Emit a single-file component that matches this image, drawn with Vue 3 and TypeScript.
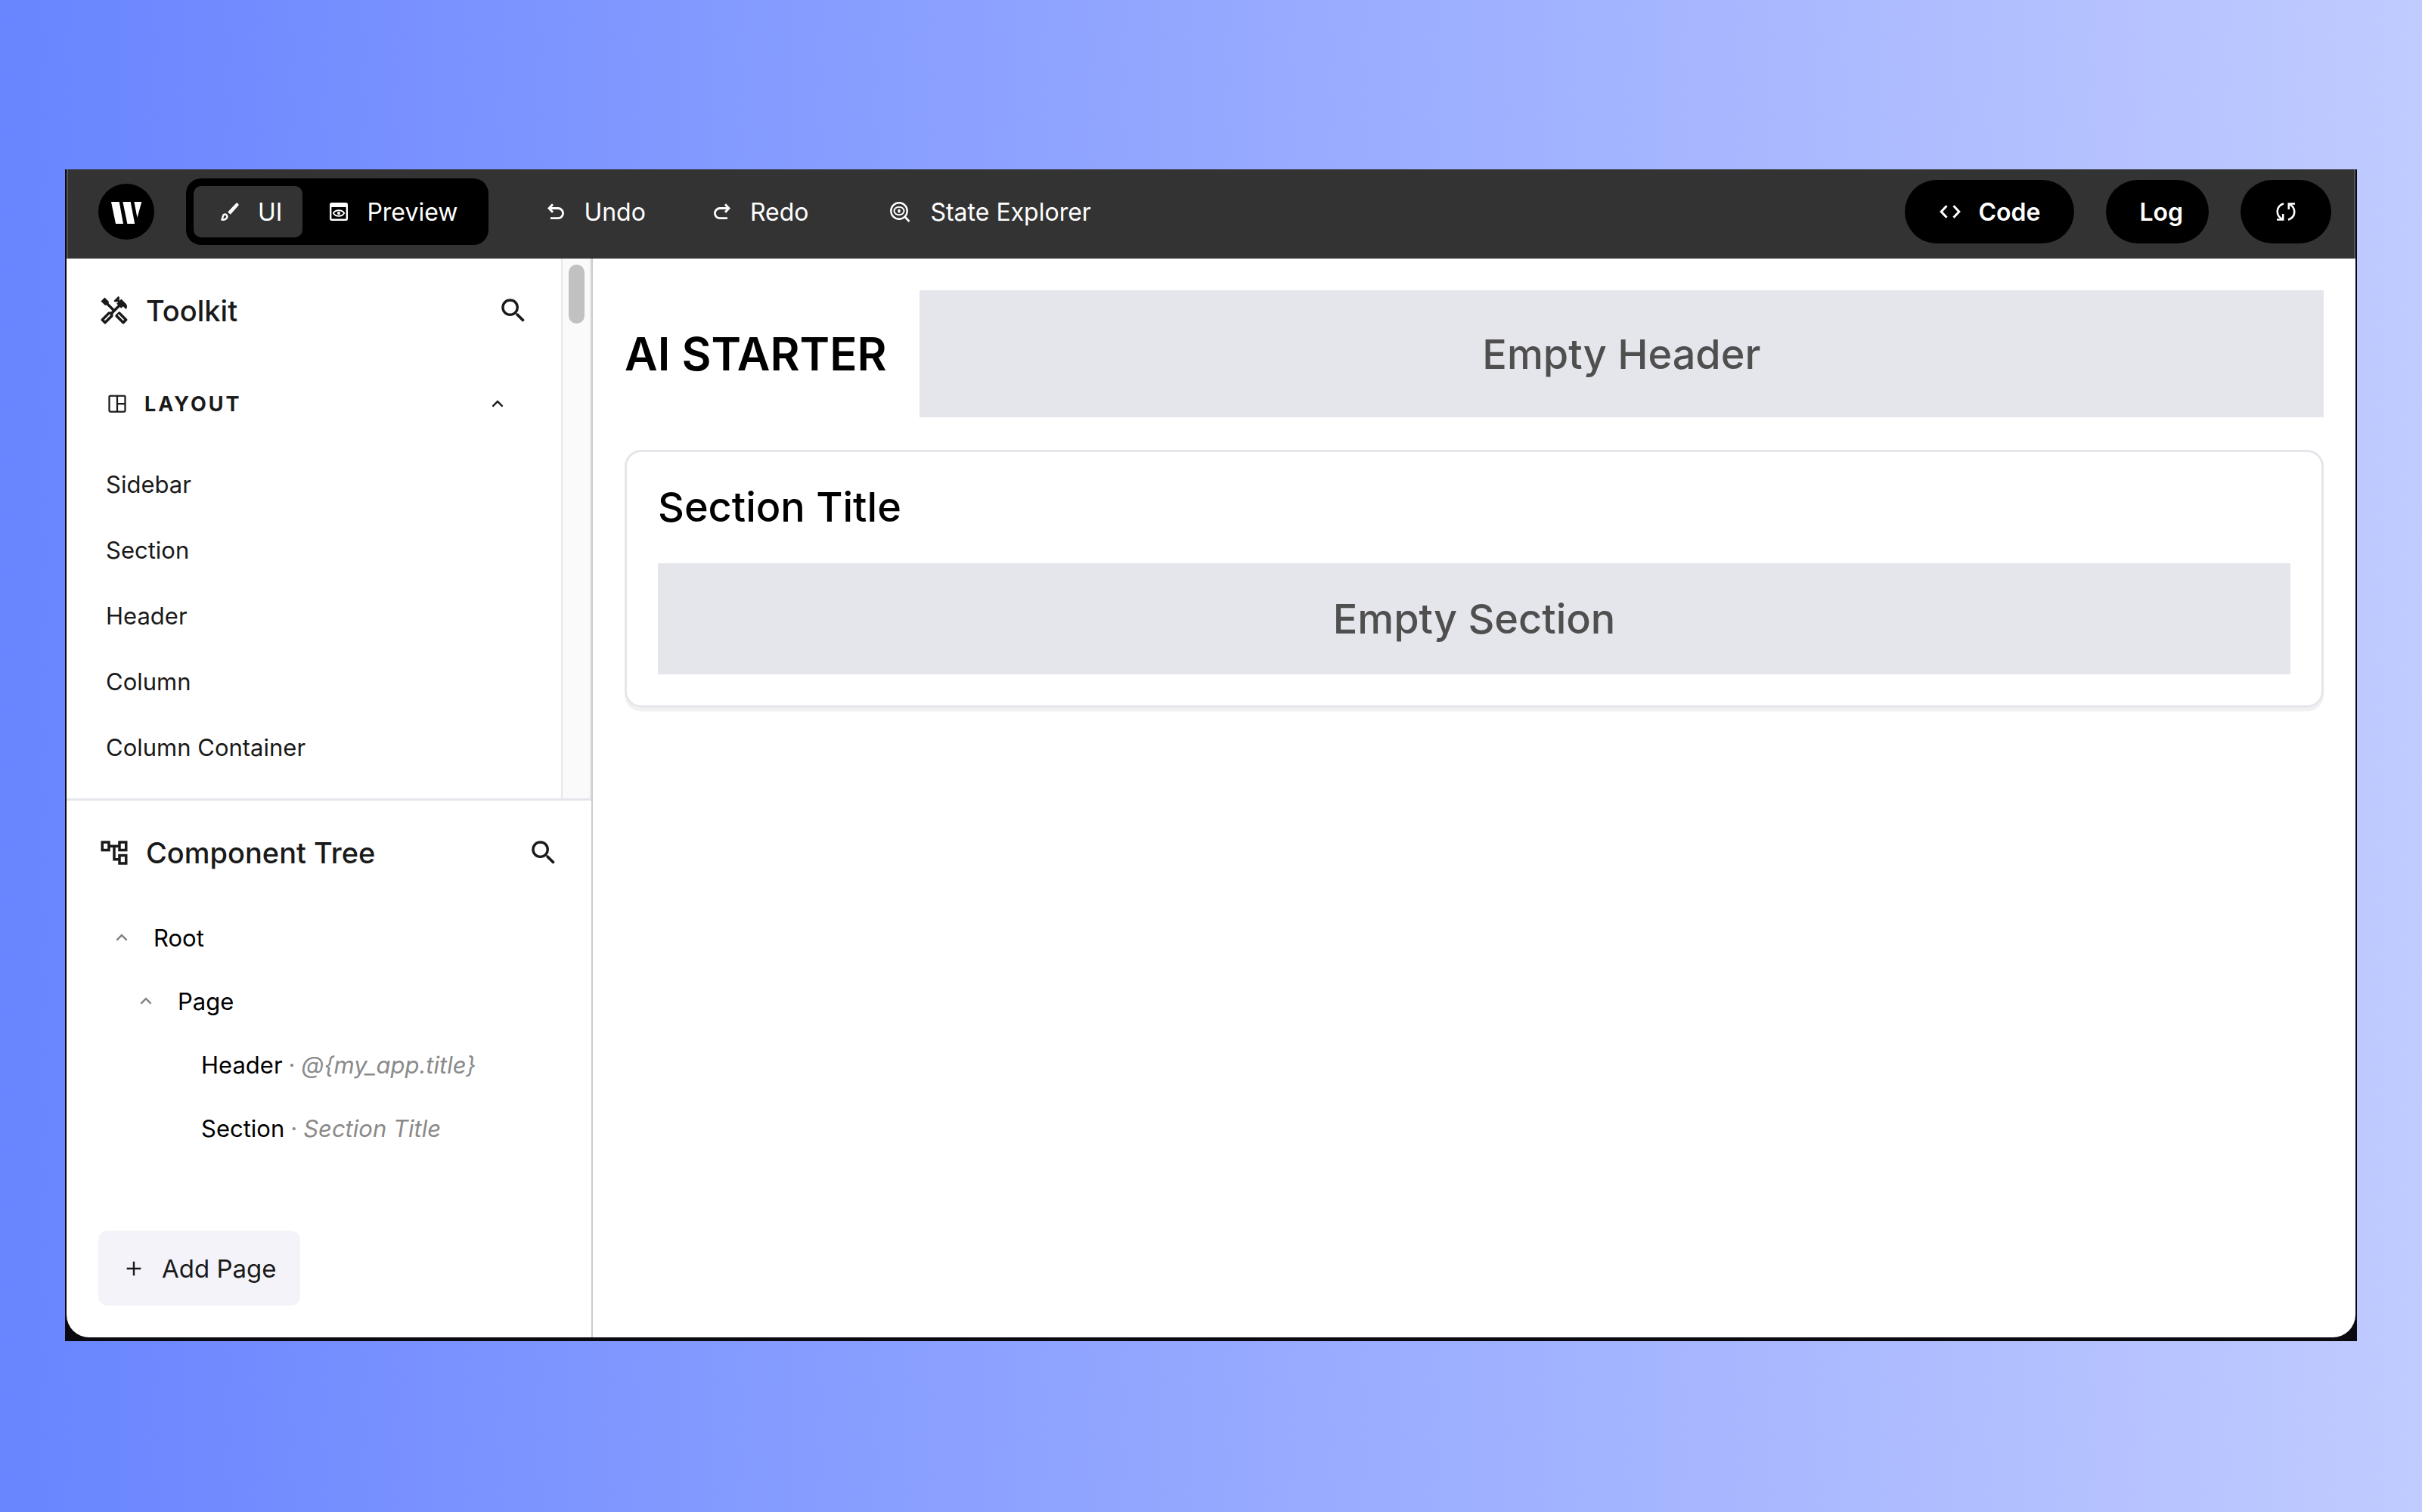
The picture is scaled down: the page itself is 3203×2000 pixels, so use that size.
<script setup lang="ts">
interface TreeNode {
  name: string
  depth: number
  expandable: boolean
  detail?: string
}

const layoutItems: string[] = ['Sidebar', 'Section', 'Header', 'Column', 'Column Container']

const treeNodes: TreeNode[] = [
  { name: 'Root', depth: 0, expandable: true },
  { name: 'Page', depth: 1, expandable: true },
  { name: 'Header', depth: 2, expandable: false, detail: '@{my_app.title}' },
  { name: 'Section', depth: 2, expandable: false, detail: 'Section Title' },
]

const caretPath = 'M12 10.828l-4.95 4.95-1.414-1.414L12 8l6.364 6.364-1.414 1.414z'
const searchPath =
  'M15.5 14h-.79l-.28-.27A6.471 6.471 0 0 0 16 9.5 6.5 6.5 0 1 0 9.5 16c1.61 0 3.09-.59 4.23-1.57l.27.28v.79l5 4.99L20.49 19l-4.99-5zm-6 0C7.01 14 5 11.99 5 9.5S7.01 5 9.5 5 14 7.01 14 9.5 11.99 14 9.5 14z'
</script>

<template>
  <div class="backdrop">
    <div class="window">
      <header class="topbar">
        <svg class="logo" viewBox="0 0 74 74" aria-label="Writer" role="img">
          <circle cx="37" cy="37" r="37" fill="#000" />
          <g fill="#fff" transform="translate(17 24)">
            <path d="M0 0h10.700l5.300 29H6z" />
            <path d="M15.400 0h10.300l5.500 29h-9.800z" />
            <path d="M30.400 0h9.900l-5.800 21z" />
          </g>
        </svg>

        <div class="modes">
          <button type="button" class="mode active">
            <svg width="24" height="24" viewBox="0 0 24 24">
              <path d="M9.200 12.500 19.800 1.300a2.200 2.200 0 0 1 3.200 3L12.700 15.800z" fill="currentColor" />
              <path
                d="M1.400 22.600c1.600-1.800.5-5.900 3.300-6.900 2.600-.8 4.500 1.900 3.300 4.300-1.200 2.300-4.100 2.900-6.600 2.600z"
                fill="none" stroke="currentColor" stroke-width="2.400" stroke-linejoin="round"
              />
            </svg>
            UI
          </button>
          <button type="button" class="mode">
            <svg width="24" height="24" viewBox="0 0 24 24" fill="none" stroke="currentColor">
              <rect x="1.200" y="1.200" width="21.600" height="21.600" rx="1.500" stroke-width="2.400" />
              <path d="M1 3.500h22" stroke-width="5" />
              <path d="M4.800 14c3-5 11.400-5 14.400 0-3 5-11.400 5-14.400 0z" stroke-width="1.800" />
              <circle cx="12" cy="14" r="2" fill="currentColor" stroke="none" />
            </svg>
            Preview
          </button>
        </div>

        <nav class="actions">
          <button type="button" class="action">
            <svg width="22" height="22" viewBox="0 0 22 22" fill="none" stroke="currentColor" stroke-width="2.800">
              <path d="M7 1.200 2 6.500l5 5.300M2.300 6.500H14a6.600 6.600 0 0 1 0 13.200H4" />
            </svg>
            Undo
          </button>
          <button type="button" class="action">
            <svg width="22" height="22" viewBox="0 0 22 22" fill="none" stroke="currentColor" stroke-width="2.800">
              <path d="M15 1.200l5 5.300-5 5.300M19.700 6.500H8a6.600 6.600 0 0 0 0 13.200h10" />
            </svg>
            Redo
          </button>
          <button type="button" class="action explorer">
            <svg width="27" height="27" viewBox="0 0 27 27" fill="none" stroke="currentColor">
              <circle cx="12" cy="12" r="10.700" stroke-width="2.400" />
              <path d="m19.500 19.500 6 6.500" stroke-width="2.600" />
              <ellipse cx="12" cy="12" rx="6.500" ry="5.300" stroke-width="2" />
              <ellipse cx="12" cy="12" rx="1.800" ry="2.600" fill="currentColor" stroke="none" />
            </svg>
            State Explorer
          </button>
        </nav>

        <div class="pills">
          <button type="button" class="pill code">
            <svg width="28" height="18" viewBox="0 0 28 18" fill="none" stroke="currentColor" stroke-width="3">
              <path d="M9.500 1.200 2.200 9l7.300 7.800M18.500 1.200 25.800 9l-7.300 7.800" />
            </svg>
            Code
          </button>
          <button type="button" class="pill log">Log</button>
          <button type="button" class="pill refresh" aria-label="Refresh">
            <svg width="26" height="26" viewBox="0 0 26 26" fill="none" stroke="currentColor" stroke-width="2.600">
              <path d="M10 2.300C-.5 6-.5 17.500 7.500 22.500M9.200 16v7.500H1" />
              <path d="M16 23.700C26.500 20 26.500 8.500 18.500 3.500M16.800 10V2.500H25" />
            </svg>
          </button>
        </div>
      </header>

      <div class="body">
        <aside class="sidebar">
          <section class="toolkit">
            <div class="toolkit-content">
              <div class="panel-head">
                <svg class="icon-lg" viewBox="0 0 24 24" fill="currentColor">
                  <path d="M21.670 18.170l-5.300-5.300h-.99l-2.540 2.540v.99l5.300 5.300c.39.39 1.020.39 1.410 0l2.120-2.120c.39-.38.39-1.020 0-1.410zm-2.830 1.420l-4.240-4.240.71-.71 4.240 4.240-.71.71z" />
                  <path d="M17.340 10.190l1.410-1.410 2.120 2.120c1.170-1.170 1.170-3.070 0-4.240l-3.540-3.540-1.410 1.410V1.710L15.220 1l-3.540 3.540.71.71h2.830l-1.410 1.410 1.060 1.060-2.890 2.890-4.130-4.130V5.060L4.830 2.040 2 4.870 5.030 7.900h1.410l4.130 4.130-.85.85H7.600l-5.300 5.300c-.39.39-.39 1.020 0 1.410l2.120 2.120c.39.39 1.020.39 1.410 0l5.300-5.300v-2.120l5.150-5.150 1.060 1.050zm-7.980 5.150l-4.240 4.240-.71-.71 4.240-4.240.71.71z" />
                </svg>
                <h2>Toolkit</h2>
                <button type="button" class="plain" aria-label="Search toolkit">
                  <svg class="icon-lg" viewBox="0 0 24 24" fill="currentColor"><path :d="searchPath" /></svg>
                </button>
              </div>

              <button type="button" class="category">
                <svg width="30" height="30" viewBox="0 0 24 24" fill="none" stroke="currentColor" stroke-width="1.800">
                  <rect x="3.600" y="3.600" width="16.800" height="16.800" rx="1" />
                  <path d="M12 3.600v16.800M12 12h8.400" />
                </svg>
                <span>LAYOUT</span>
                <svg class="caret" viewBox="0 0 24 24" fill="currentColor"><path :d="caretPath" /></svg>
              </button>

              <ul class="items">
                <li v-for="item in layoutItems" :key="item">{{ item }}</li>
              </ul>
            </div>
            <div class="track"><div class="thumb"></div></div>
          </section>

          <section class="tree">
            <div class="panel-head">
              <svg class="icon-lg" viewBox="0 0 24 24" fill="currentColor">
                <path d="M22 11V3h-7v3H9V3H2v8h7V8h2v10h4v3h7v-8h-7v3h-2V8h2v3h7zM7 9H4V5h3v4zm10 6h3v4h-3v-4zm0-10h3v4h-3V5z" />
              </svg>
              <h2>Component Tree</h2>
              <button type="button" class="plain" aria-label="Search component tree">
                <svg class="icon-lg" viewBox="0 0 24 24" fill="currentColor"><path :d="searchPath" /></svg>
              </button>
            </div>

            <ul class="nodes">
              <li v-for="node in treeNodes" :key="node.name" :class="'depth-' + node.depth">
                <svg v-if="node.expandable" class="caret" viewBox="0 0 24 24" fill="currentColor">
                  <path :d="caretPath" />
                </svg>
                <span>{{ node.name }}</span>
                <span v-if="node.detail" class="detail">·</span>
                <em v-if="node.detail" class="detail">{{ node.detail }}</em>
              </li>
            </ul>

            <button type="button" class="add-page">
              <svg width="32" height="32" viewBox="0 0 24 24" fill="currentColor">
                <path d="M11.100 11.100V5h1.800v6.100H19v1.800h-6.100V19h-1.800v-6.100H5v-1.800z" />
              </svg>
              Add Page
            </button>
          </section>
        </aside>

        <main class="canvas">
          <div class="app-header">
            <h1>AI STARTER</h1>
            <div class="placeholder header-slot">Empty Header</div>
          </div>
          <section class="card">
            <h2>Section Title</h2>
            <div class="placeholder section-slot">Empty Section</div>
          </section>
        </main>
      </div>
    </div>
  </div>
</template>

<style>
body {
  margin: 0;
}
</style>

<style scoped>
* {
  box-sizing: border-box;
}
.backdrop {
  min-height: 100vh;
  padding: 224px 86px 226px;
  display: flex;
  background: linear-gradient(90deg, #6985ff 0%, #c0cbff 100%);
  font-family: Inter, 'Noto Sans', sans-serif;
  color: #1a1a1a;
}
.window {
  flex: 1;
  min-width: 0;
  display: flex;
  flex-direction: column;
  background: #0b0a10;
  border: solid #0b0a10;
  border-width: 0 2px 5px;
}
button {
  border: 0;
  background: none;
  padding: 0;
  font: inherit;
  color: inherit;
  display: flex;
  align-items: center;
}
svg {
  display: block;
  flex: none;
}
h1,
h2,
ul {
  margin: 0;
  padding: 0;
  list-style: none;
}

/* Top bar */
.topbar {
  height: 118px;
  padding: 0 30px 6px 40px;
  display: flex;
  align-items: center;
  background: #333;
  color: #fff;
  font-size: 32px;
  border: solid #555;
  border-width: 0 2px;
}
.logo {
  width: 74px;
  height: 74px;
}
.modes {
  height: 88px;
  margin-left: 42px;
  padding: 10px;
  display: flex;
  border-radius: 20px;
  background: #000;
}
.mode {
  gap: 25px;
  padding: 0 31px 0 36px;
  border-radius: 10px;
}
.mode.active {
  padding-right: 27px;
  background: #333;
}
.actions {
  display: flex;
  margin-left: 78px;
}
.action {
  gap: 26px;
  margin-right: 90px;
}
.action.explorer {
  margin: 0 0 0 18px;
}
.pills {
  display: flex;
  gap: 42px;
  margin-left: auto;
  font-weight: 600;
}
.pill {
  height: 84px;
  border-radius: 42px;
  background: #000;
}
.code {
  gap: 23px;
  padding: 0 45px 0 46px;
}
.log {
  padding: 0 34px 0 44px;
}
.refresh {
  padding: 0 47px;
}

/* Sidebar */
.body {
  flex: 1;
  display: flex;
  background: #fff;
  border-radius: 0 0 30px 30px;
  overflow: hidden;
}
.sidebar {
  width: 696px;
  flex: none;
  display: flex;
  flex-direction: column;
  border-right: 2px solid #ccc;
}
.toolkit {
  display: flex;
  border-bottom: 3px solid #e5e6eb;
}
.toolkit-content {
  flex: 1;
  padding: 48px 42px 24px;
}
.track {
  width: 40px;
  padding: 8px;
  background: #fafafa;
  border: solid #e8e8e8;
  border-width: 0 2px;
}
.thumb {
  width: 21px;
  height: 78px;
  border-radius: 11px;
  background: #c1c1c1;
}
.panel-head {
  height: 42px;
  display: flex;
  align-items: center;
  gap: 21px;
}
.panel-head h2 {
  flex: 1;
  font-size: 38px;
  font-weight: 500;
}
.icon-lg {
  width: 42px;
  height: 42px;
}
.category {
  width: 100%;
  height: 40px;
  margin-top: 82px;
  padding: 0 28px 0 10px;
  gap: 21px;
  font-size: 27px;
  font-weight: 700;
  letter-spacing: 3px;
}
.category span {
  flex: 1;
  text-align: left;
}
.caret {
  width: 28px;
  height: 28px;
}
.items {
  margin-top: 43px;
  padding-left: 10px;
  font-size: 31px;
  line-height: 87px;
}
.tree {
  flex: 1;
  display: flex;
  flex-direction: column;
  padding: 48px 42px 42px;
}
.nodes {
  margin: 49px 0 42px;
  font-size: 31px;
  color: #000;
}
.nodes li {
  height: 84px;
  display: flex;
  align-items: center;
}
.nodes .caret {
  margin-right: 28px;
  color: #808080;
}
.depth-0 {
  padding-left: 17px;
}
.depth-1 {
  padding-left: 49px;
}
.depth-2 {
  padding-left: 136px;
}
.detail {
  margin-left: 8px;
  color: #8a8a8a;
}
.add-page {
  align-self: flex-start;
  height: 99px;
  margin-top: auto;
  padding: 0 31px;
  gap: 21px;
  border-radius: 12px;
  background: #f4f3f9;
  font-size: 33px;
}

/* Canvas */
.canvas {
  flex: 1;
  min-width: 0;
  padding: 42px;
}
.app-header {
  display: flex;
  align-items: center;
  gap: 43px;
}
h1 {
  font-size: 60px;
  font-weight: 600;
  color: #000;
}
.placeholder {
  display: flex;
  align-items: center;
  justify-content: center;
  background: #e5e6eb;
  color: #4f4f4f;
  font-size: 54px;
  font-weight: 500;
}
.header-slot {
  flex: 1;
  height: 168px;
}
.card {
  margin-top: 43px;
  padding: 41px;
  border: 3px solid #e5e6eb;
  border-radius: 22px;
  box-shadow: 0 5px 0 #f1f1f1;
}
.card h2 {
  font-size: 54px;
  font-weight: 500;
  line-height: 63px;
  color: #000;
}
.section-slot {
  height: 147px;
  margin-top: 43px;
}
</style>
